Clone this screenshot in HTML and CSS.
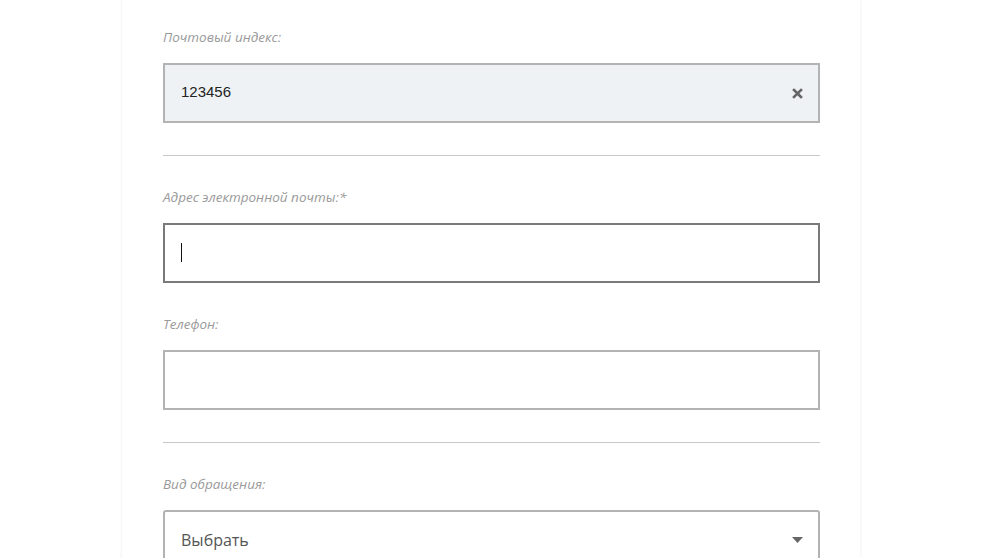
FILE: index.html
```html
<!DOCTYPE html>
<html lang="ru">
<head>
    <meta charset="UTF-8">
    <meta name="viewport" content="width=device-width, initial-scale=1.0">
    <title>Обращение</title>
    <link rel="stylesheet" href="styles.css">
</head>
<body>
    <div class="card">
        <div class="field">
            <label class="field-label">Почтовый индекс:</label>
            <div class="input filled">
                <span class="value">123456</span>
                <span class="clear">
                    <svg width="11" height="11" viewBox="0 0 11 11"><path d="M2 2 L9 9 M9 2 L2 9" stroke="#666" stroke-width="2.6" stroke-linecap="square"/></svg>
                </span>
            </div>
        </div>

        <hr class="sep">

        <div class="field">
            <label class="field-label">Адрес электронной почты:*</label>
            <div class="input focused"><span class="caret"></span></div>
        </div>

        <div class="field">
            <label class="field-label">Телефон:</label>
            <div class="input"></div>
        </div>

        <hr class="sep">

        <div class="field">
            <label class="field-label">Вид обращения:</label>
            <div class="input select">
                <span class="placeholder">Выбрать</span>
                <svg class="arrow" width="11" height="6" viewBox="0 0 11 6"><path d="M0 0 L11 0 L5.5 6 Z" fill="#666"/></svg>
            </div>
        </div>
    </div>
</body>
</html>
```

FILE: styles.css
```css
html, body { margin: 0; padding: 0; background: #fff; overflow: hidden; }
body { height: 558px; }
.card {
    margin-left: 122px;
    width: 738px;
    box-sizing: border-box;
    padding: 29px 40px 0 41px;
    min-height: 620px;
    background: #fff;
    box-shadow: 0 0 3px rgba(0, 0, 0, 0.09);
}
.field { margin-bottom: 33px; }
.field-label {
    display: block;
    font-family: "Open Sans", sans-serif;
    font-style: italic;
    font-size: 13.5px;
    line-height: 16px;
    color: #9a9a9a;
    margin-bottom: 18px;
}
.input {
    height: 60px;
    box-sizing: border-box;
    border: 2px solid #b3b3b3;
    background: #fff;
    display: flex;
    align-items: center;
    padding: 0 15px 0 16px;
}
.input.filled { background: #eef2f5; justify-content: space-between; }
.input.focused { border-color: #7a7a7a; }
.input.select { border-radius: 3px 3px 0 0; justify-content: space-between; }
.value {
    font-family: "Liberation Sans", Arial, sans-serif;
    font-size: 15px;
    color: #222;
    margin-bottom: 3px;
}
.clear { display: flex; }
.caret { width: 1px; height: 19px; background: #111; margin-top: -2px; }
.placeholder {
    font-family: "Open Sans", sans-serif;
    font-size: 16px;
    color: #555;
}
.sep {
    border: 0;
    border-top: 1px solid #c8c8c8;
    margin: -1px 0 33px;
}
```
